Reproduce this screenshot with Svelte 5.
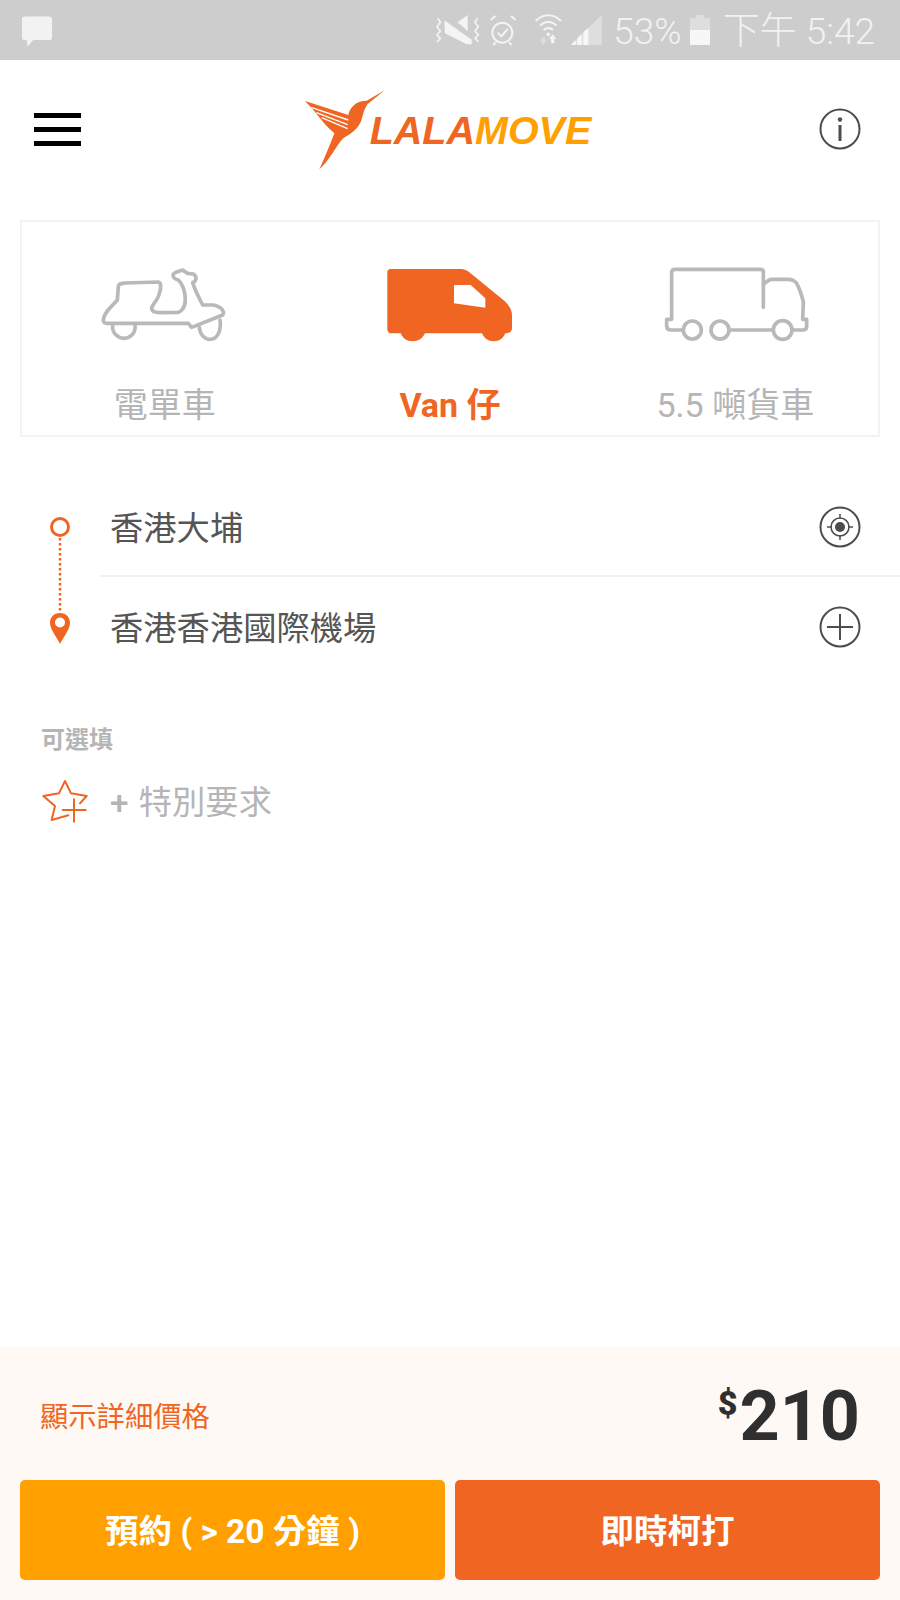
<script>
  const vehicles = [
    { id: "bike", name: "電單車" },
    { id: "van", name: "Van 仔", active: true },
    { id: "truck", name: "5.5 噸貨車" }
  ];
</script>

<div class="page">
  <div class="status">
    <svg class="bubble" width="32" height="31" viewBox="0 0 34 32">
      <path d="M4 0H30C32 0 33 1 33 3V22C33 24 32 25 30 25H13L7 32L6 25H4C2 25 1 24 1 22V3C1 1 2 0 4 0Z" fill="#f2f2f2" />
    </svg>
    <div class="status-right">
      <svg class="sys" width="190" height="50" viewBox="0 0 570 150">
        <g fill="none" stroke="#f4f4f4" stroke-width="5">
          <path d="M38 40L46 52L36 65L46 78L36 90L46 100L36 112M158 40L150 52L160 65L150 78L160 90L150 100L160 110" />
        </g>
        <path d="M58 46L140 104V118H125L60 85Z" fill="#f4f4f4" />
        <path d="M98 52L128 30V78Z" fill="#f4f4f4" />
        <g fill="none" stroke="#f4f4f4" stroke-width="6">
          <circle cx="232" cy="83" r="30" />
          <path d="M218 83L229 94L248 72M197 45L212 33M272 45L258 33M212 112L205 120M252 112L260 120" />
          <path d="M332 48C355 25 385 25 408 48M345 62C360 47 380 47 395 62M356 75C365 67 375 67 384 75" />
        </g>
        <circle cx="370" cy="88" r="5.500" fill="#f4f4f4" />
        <path d="M350 97H360V106H366L355 119L344 106H350Z" fill="#dedede" />
        <path d="M372 102L383 88L394 102H388V115H378V102Z" fill="#f4f4f4" />
        <path d="M438 120L530 30V120Z" fill="#dedede" />
        <path d="M440 120V117L452 105V120ZM457 120V100L470 87V120ZM475 120V82L490 68V120Z" fill="#f7f7f7" />
      </svg>
      <span class="pct">53%</span>
      <svg class="batt" width="20" height="32" viewBox="0 0 20 32">
        <path d="M6 1H14V4H20V31H0V4H6Z" fill="#dedede" />
        <rect y="16" width="20" height="15" fill="#f7f7f7" />
      </svg>
      <span class="time">下午 5:42</span>
    </div>
  </div>

  <header class="nav">
    <div class="burger"><i></i><i></i><i></i></div>
    <div class="logo">
      <svg width="110" height="100" viewBox="0 0 330 300">
        <path fill="#f06522" d="M270 30L218 72C208 85 205 100 200 118C192 145 170 160 145 175C125 195 105 240 73 268C88 235 105 195 118 160C108 150 95 140 85 127L52 86L30 63L160 105C165 80 185 62 215 62Z" />
        <path fill="#f06522" d="M85 127L165 150L170 105L160 105Z" />
        <path d="M48 82L160 120M64 98L158 134M80 113L158 146" stroke="#fff" stroke-width="4" fill="none" />
      </svg>
      <span class="word"><b>LALA</b><em>MOVE</em></span>
    </div>
    <svg class="round" width="42" height="42" viewBox="0 0 42 42" fill="none" stroke="#4d4d4d">
      <circle cx="21" cy="21" r="19.500" stroke-width="2" />
      <circle cx="21" cy="11.500" r="2.200" fill="#4d4d4d" stroke="none" />
      <path d="M21 17V33" stroke-width="3" />
    </svg>
  </header>

  <section class="types">
    {#each vehicles as v}
      <div class="type" class:active={v.active}>
        {#if v.id === "bike"}
          <svg width="180" height="100" viewBox="0 0 540 300" fill="none" stroke="#b9b9b9" stroke-width="11" stroke-linejoin="round" stroke-linecap="round">
            <path d="M70 210C70 190 95 170 112 150L115 110C115 100 125 100 135 99L235 96C245 98 243 115 238 130C235 150 215 165 215 175C215 185 225 188 240 188L295 187C312 180 318 160 315 135C312 115 305 100 295 90C275 85 275 70 290 66L308 60L322 70L340 72C352 80 350 92 338 98C345 120 360 150 368 165L400 165C425 170 435 185 428 195L335 232L325 220L80 220C72 218 68 215 70 210Z" />
            <path d="M98 225C95 250 115 265 132 265C150 265 168 250 165 225M358 232C360 255 375 268 390 268C410 268 425 245 420 210" />
          </svg>
        {:else if v.id === "van"}
          <svg width="170" height="100" viewBox="0 0 510 300">
            <path fill="#f06522" d="M62 57L270 57C285 57 292 62 300 68L400 150C415 162 426 180 426 195L426 235C426 245 418 250 408 250L406 250C400 265 388 274 372 274C355 274 342 265 336 250L165 250C158 265 145 274 128 274C110 274 98 265 92 250L62 250C56 250 52 245 52 238L52 67C52 60 56 57 62 57Z" />
            <path fill="#fff" d="M252 105L302 105L346 145L346 173L252 160Z" />
          </svg>
        {:else}
          <svg width="180" height="100" viewBox="0 0 540 300" fill="none" stroke="#b9b9b9" stroke-width="11" stroke-linejoin="round" stroke-linecap="round">
            <path d="M340 172L340 65C340 60 335 58 330 58L75 58C68 58 65 62 65 68L65 208L50 208L50 228C50 236 55 240 62 240L97 240" />
            <path d="M428 240L460 240C468 240 470 235 470 228L470 208L458 208L460 155C455 135 448 115 440 100C432 90 425 88 415 88L365 88C355 88 350 95 342 102" />
            <path d="M238 240H368" />
            <circle cx="127" cy="240" r="27" />
            <circle cx="210" cy="240" r="27" />
            <circle cx="398" cy="240" r="28" />
          </svg>
        {/if}
        <span>{v.name}</span>
      </div>
    {/each}
  </section>

  <section class="route">
    <svg class="rail" width="100" height="198" viewBox="0 0 100 198">
      <circle cx="60" cy="48" r="8.500" fill="none" stroke="#f06522" stroke-width="3" />
      <path d="M60 59V133" stroke="#f06522" stroke-width="2.500" stroke-dasharray="2.500 2.500" />
      <path fill="#f06522" fill-rule="evenodd" d="M60 134C66 134 70 138 70 144C70 150 64 157 60 165C56 157 50 150 50 144C50 138 54 134 60 134ZM60 138.500A5 5 0 1 0 60 148.500A5 5 0 1 0 60 138.500Z" />
    </svg>
    <div class="stops">
      <div class="stop">
        <span>香港大埔</span>
        <svg class="round" width="42" height="42" viewBox="0 0 42 42" fill="none" stroke="#4d4d4d">
          <circle cx="21" cy="21" r="19.500" stroke-width="2" />
          <circle cx="21" cy="21" r="9" stroke-width="1.500" />
          <circle cx="21" cy="21" r="5" fill="#4d4d4d" stroke="none" />
          <path d="M21 8V13M21 29V34M8 21H13M29 21H34" stroke-width="1.500" />
        </svg>
      </div>
      <div class="stop">
        <span>香港香港國際機場</span>
        <svg class="round" width="42" height="42" viewBox="0 0 42 42" fill="none" stroke="#4d4d4d">
          <circle cx="21" cy="21" r="19.500" stroke-width="2" />
          <path d="M8 21H34M21 8V34" stroke-width="2" />
        </svg>
      </div>
    </div>
  </section>

  <div class="optional">可選填</div>
  <div class="special">
    <svg width="70" height="60" viewBox="0 0 210 180" fill="none" stroke="#f06522" stroke-width="6" stroke-linejoin="round" stroke-linecap="round">
      <path d="M100 136L50 150L60 108L25 78L72 70L90 33L108 70L155 78L135 100" />
      <path d="M83 120H152M117 88V155" />
    </svg>
    <span><i>+</i> 特別要求</span>
  </div>

  <footer class="bottom">
    <div class="summary">
      <span class="detail">顯示詳細價格</span>
      <span class="price"><sup>$</sup>210</span>
    </div>
    <div class="actions">
      <button class="later">預約 ( &gt; 20 分鐘 )</button>
      <button class="now">即時柯打</button>
    </div>
  </footer>
</div>

<style>
  :global(body) {
    margin: 0;
    background: #fff;
  }

  .page {
    width: 900px;
    height: 1600px;
    display: flex;
    flex-direction: column;
    font-family: Roboto, "Noto Sans CJK TC", sans-serif;
    overflow: hidden;
  }

  .status {
    height: 60px;
    flex: none;
    box-sizing: border-box;
    background: #cdcdcd;
    display: flex;
    align-items: center;
    justify-content: space-between;
    padding: 0 25px 0 21px;
    color: #f2f2f2;
  }

  .bubble { margin-top: 2px; }

  .status-right {
    display: flex;
    align-items: center;
  }

  .sys { display: block; }
  .batt { margin-left: 8px; }

  .pct, .time {
    font-size: 37px;
    font-weight: 300;
    line-height: 40px;
    padding-top: 3px;
  }

  .pct { margin-left: -2px; }
  .time { margin-left: 13px; }

  .nav {
    height: 138px;
    flex: none;
    display: flex;
    align-items: center;
    justify-content: space-between;
    padding: 0 39px 0 34px;
  }

  .burger {
    width: 47px;
    display: flex;
    flex-direction: column;
    gap: 9px;
  }

  .burger i {
    height: 5px;
    background: #000;
  }

  .logo {
    display: flex;
    align-items: center;
    margin-left: -14px;
    padding-top: 2px;
  }

  .logo svg { display: block; }

  .word {
    font-family: "Liberation Sans", sans-serif;
    font-size: 39.5px;
    font-weight: 700;
    font-style: italic;
    line-height: 40px;
    margin: 0 0 0 -35px;
  }

  .word b { color: #f06522; }
  .word em { color: #ffa000; }

  .round { display: block; flex: none; }

  .types {
    margin: 22px 20px 0;
    height: 217px;
    flex: none;
    box-sizing: border-box;
    border: 2.5px solid #f3f3f3;
    display: grid;
    grid-template-columns: repeat(3, 1fr);
  }

  .type {
    display: flex;
    flex-direction: column;
    align-items: center;
    padding-top: 27.5px;
    font-size: 34px;
    color: #b5b5b5;
  }

  .type svg {
    display: block;
    margin-left: 10px;
  }

  .type span {
    line-height: 44px;
    margin-top: 33px;
  }

  .type.active {
    color: #f06522;
    font-weight: 700;
  }

  .route {
    margin-top: 42px;
    display: flex;
    flex: none;
  }

  .rail {
    flex: none;
    display: block;
  }

  .stops { flex: 1; }

  .stop {
    height: 96px;
    display: flex;
    align-items: center;
    justify-content: space-between;
    padding: 0 39px 0 10px;
    font-size: 33.3px;
    color: #555;
  }

  .stop span { padding-bottom: 4px; }

  .stop:first-child {
    border-bottom: 2.5px solid #f1f1f1;
  }

  .stop:last-child { height: 100px; }

  .optional {
    margin: 46px 0 0 41px;
    font-size: 24px;
    line-height: 34px;
    font-weight: 700;
    color: #b5b5b5;
  }

  .special {
    display: flex;
    align-items: center;
    margin: 13px 0 0 35px;
    font-size: 33.3px;
    color: #b5b5b5;
  }

  .special svg {
    display: block;
    margin-bottom: 6px;
  }

  .special span {
    margin-left: 5px;
    line-height: 44px;
  }

  .special i {
    font-style: normal;
    font-weight: 500;
    margin-right: 2px;
  }

  .bottom {
    margin-top: auto;
    height: 253px;
    flex: none;
    box-sizing: border-box;
    background: #fff9f6;
    padding: 0 20px 20px;
    display: flex;
    flex-direction: column;
    justify-content: flex-end;
  }

  .summary {
    display: flex;
    align-items: center;
    justify-content: space-between;
    padding: 0 20px 0 20px;
    margin-bottom: 22px;
  }

  .detail {
    font-size: 28.3px;
    color: #f06522;
    padding-bottom: 4px;
  }

  .price {
    font-size: 70px;
    line-height: 84px;
    font-weight: 700;
    color: #2f2f2f;
  }

  .price sup {
    font-size: 34px;
    font-weight: 900;
    line-height: 0;
    vertical-align: 25px;
    margin-right: 2px;
  }

  .actions {
    display: flex;
    gap: 10px;
  }

  .actions button {
    flex: 1;
    height: 100px;
    border: 0;
    border-radius: 5px;
    color: #fff;
    font: 700 33.5px Roboto, "Noto Sans CJK TC", sans-serif;
    padding: 0 0 4px;
  }

  .later { background: #ffa000; }
  .now { background: #f06522; }
</style>
